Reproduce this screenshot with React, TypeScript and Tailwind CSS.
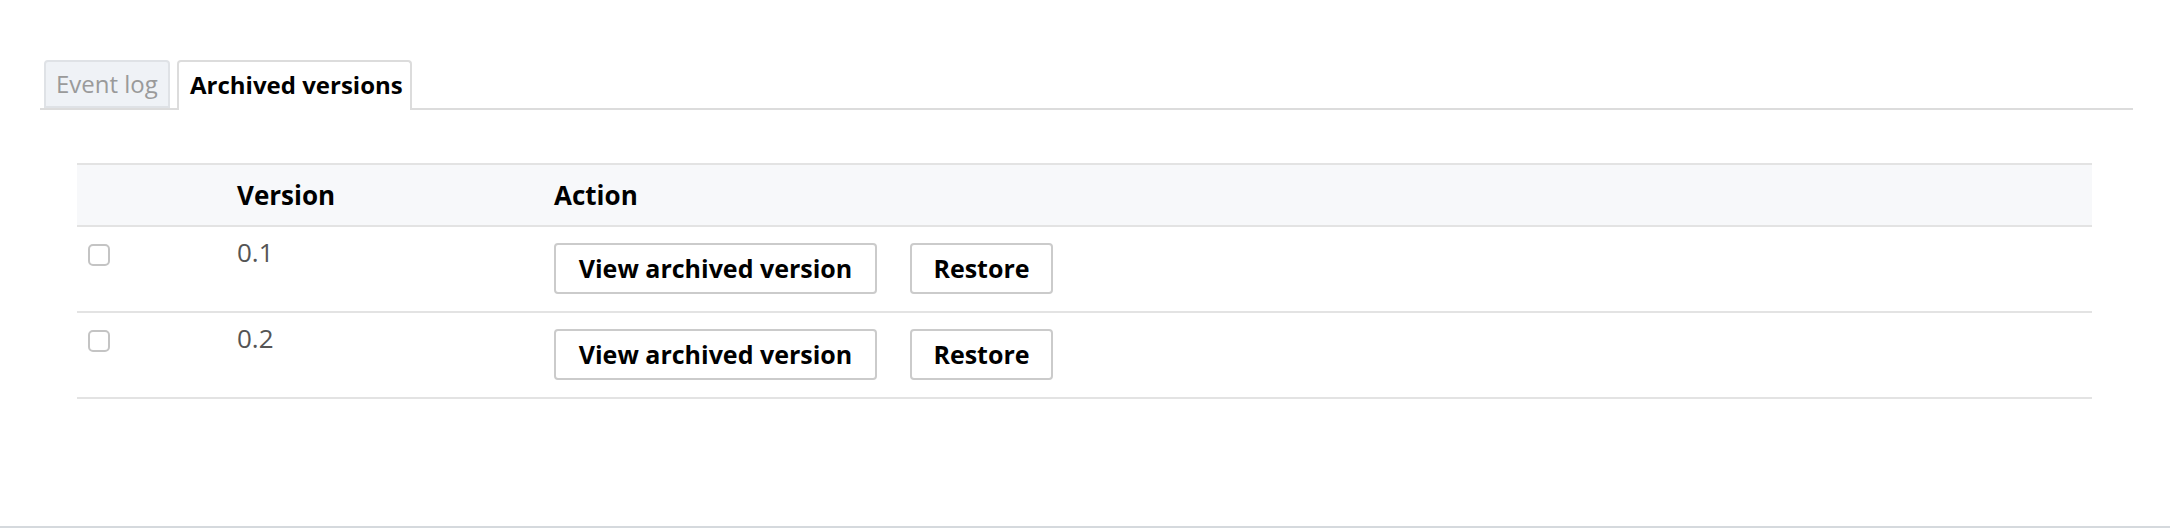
const versions = ["0.1", "0.2"];

function Tabs() {
  return (
    <div className="ml-[40px] mr-[37px] mt-[60px] flex border-b-2 border-[#dcdcdc] pl-[4px]">
      <button
        type="button"
        className="-mb-[2px] flex h-[48px] w-[126px] items-center justify-start whitespace-nowrap rounded-t-[4px] border-2 border-[#dfe2e6] bg-[#eff2f6] pl-[10px] text-[24px] text-[#9a9a9a]"
      >
        Event log
      </button>
      <button
        type="button"
        className="-mb-[2px] ml-[7px] flex h-[50px] w-[235px] items-center justify-start whitespace-nowrap rounded-t-[4px] border-2 border-b-0 border-[#dcdcdc] bg-white pb-[2px] pl-[11px] text-[24px] font-bold text-black"
      >
        Archived versions
      </button>
    </div>
  );
}

function ActionButton({ label, width }: { label: string; width: string }) {
  return (
    <button
      type="button"
      className={`flex h-[51px] ${width} items-center justify-center whitespace-nowrap rounded-[4px] border-2 border-[#cbcbcb] bg-white text-[25px] font-bold text-black`}
    >
      {label}
    </button>
  );
}

export default function App() {
  return (
    <div
      className="flex h-[528px] flex-col border-b-2 border-[#d5d9dd] bg-white"
      style={{ fontFamily: '"Open Sans", "Liberation Sans", sans-serif' }}
    >
      <Tabs />

      <div className="ml-[77px] mr-[78px] mt-[53px]">
        {/* header */}
        <div className="flex h-[64px] items-center border-y-2 border-[#e3e3e3] bg-[#f7f8fa] text-[26px] font-bold text-black">
          <div className="w-[160px]" />
          <div className="w-[317px]">Version</div>
          <div>Action</div>
        </div>

        {versions.map((v) => (
          <div key={v} className="flex h-[86px] border-b-2 border-[#e3e3e3]">
            <div className="w-[160px] pl-[11px] pt-[17px]">
              <input
                type="checkbox"
                className="h-[22px] w-[22px] appearance-none rounded-[5px] border-2 border-[#c4c4c4] bg-white"
              />
            </div>
            <div className="w-[317px] pt-[12px] text-[26px] leading-[26px] text-[#555]">{v}</div>
            <div className="flex gap-[33px] pt-[16px]">
              <ActionButton label="View archived version" width="w-[323px]" />
              <ActionButton label="Restore" width="w-[143px]" />
            </div>
          </div>
        ))}
      </div>
    </div>
  );
}
